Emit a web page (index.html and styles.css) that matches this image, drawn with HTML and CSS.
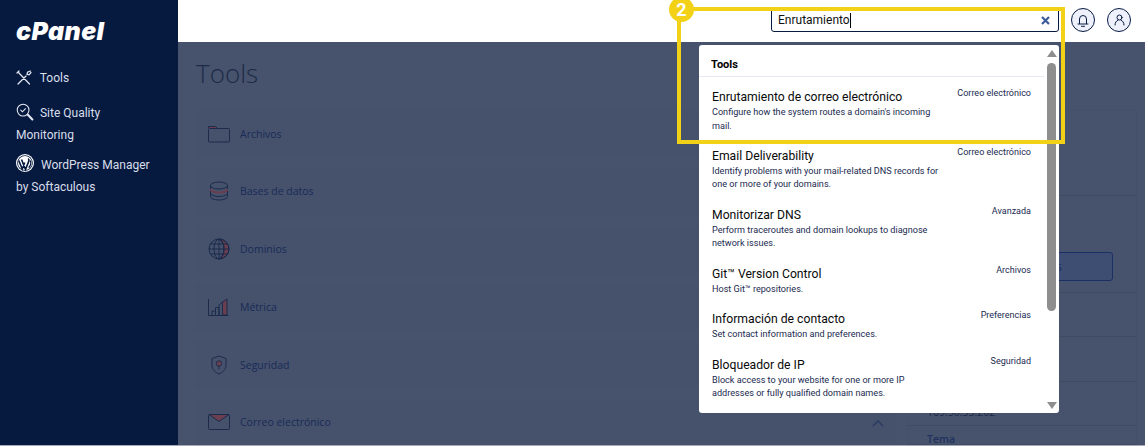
FILE: index.html
```html
<!DOCTYPE html>
<html>
<head>
  <title>cPanel Tools</title>
  <link rel="stylesheet" href="styles.css">
</head>
<body>
  <div class="app">
    <aside class="sidebar">
      <div class="logo">cPanel</div>
      <nav class="side-nav">
        <a class="side-link">
          <svg class="side-icon" width="16" height="15" viewBox="0 0 16 15" fill="none" stroke="#e6e9f2" stroke-width="1.2" stroke-linecap="round"><path d="M2 2l11.500 12M1 3l2-2M14.500 1l-3 1.300-.5 2 2 .5 2-2.300M10 6L2 14"/></svg>
          Tools
        </a>
        <a class="side-link">
          <svg class="side-icon side-icon-search" width="18" height="18" viewBox="0 0 19 19" fill="none" stroke="#e6e9f2" stroke-width="1.1" stroke-linecap="round"><circle cx="7.500" cy="7.500" r="6.200"/><path d="M5 7.500l1.800 1.800L10 6"/><path d="M12.500 12.500l4.800 4.800" stroke-width="2.200"/></svg>
          Site Quality Monitoring
        </a>
        <a class="side-link">
          <svg class="side-icon side-icon-wp" width="18" height="18" viewBox="0 0 18 18" fill="none"><circle cx="9" cy="9" r="9" fill="#fff"/><circle cx="9" cy="9" r="7.800" fill="#061a40"/><circle cx="9" cy="9" r="7" fill="#fff"/><path d="M2.800 6.500L6.200 15l2.500-6.500M5.500 5.500L9.500 15.600l3.200-8.200c.5-1.400.2-2.400-.8-2.400" stroke="#061a40" stroke-width="1.600"/><path d="M14.200 6.500c1.200 2.400.8 4.800-1.500 7.200" stroke="#061a40" stroke-width="1.300"/></svg>
          WordPress Manager by Softaculous
        </a>
      </nav>
    </aside>

    <div class="content">
      <header class="topbar">
        <div class="search">
          <span class="search-text">Enrutamiento</span>
          <svg width="9" height="9" viewBox="0 0 9 9" fill="none" stroke="#3c5c9c" stroke-width="2.200"><path d="M1 1l7 7M8 1l-7 7"/></svg>
        </div>
        <button class="round-btn">
          <svg width="12" height="13" viewBox="0 0 12 13" fill="none" stroke="#061a40" stroke-width="1" stroke-linecap="round"><path d="M2.500 9.500V5a3.500 3.500 0 0 1 7 0v4.500M1 10h10M4.500 12.300h3"/></svg>
        </button>
        <button class="round-btn">
          <svg width="11" height="12" viewBox="0 0 11 12" fill="none" stroke="#061a40" stroke-width="1" stroke-linecap="round"><circle cx="5.500" cy="3.500" r="2.500"/><path d="M1 11c0-2.500 1.500-4.300 3-4.800M10 11c0-2.500-1.500-4.300-3-4.800"/></svg>
        </button>
      </header>

      <main class="main">
        <h1 class="page-title">Tools</h1>
        <div class="columns">
          <div class="tool-groups">
            <div class="group-card">
              <svg class="group-icon" width="22" height="18" viewBox="0 0 22 18" fill="none" stroke="#1c2a4c" stroke-width="1"><path d="M.5 3V1.500h7L9 3" fill="#6b3f50"/><rect x=".5" y="3.500" width="21" height="13.500" rx="1"/></svg>
              <span>Archivos</span>
            </div>
            <div class="group-card">
              <svg class="group-icon" width="22" height="20" viewBox="0 0 22 20" fill="none" stroke="#1c2a4c" stroke-width="1"><ellipse cx="11" cy="4.500" rx="8.500" ry="3.500"/><path d="M2.500 4.500v11c0 2 3.800 3.500 8.500 3.500s8.500-1.500 8.500-3.500v-11"/><path d="M2.500 8c0 2 3.800 3.500 8.500 3.500s8.500-1.500 8.500-3.500" stroke="#6b3f50" stroke-width="2"/><path d="M2.500 12c0 2 3.800 3.500 8.500 3.500s8.500-1.500 8.500-3.500"/></svg>
              <span>Bases de datos</span>
            </div>
            <div class="group-card">
              <svg class="group-icon" width="22" height="22" viewBox="0 0 22 22" fill="none" stroke="#1c2a4c" stroke-width="1"><path d="M11 1a10 10 0 0 1 0 20c3-2 5-5.500 5-10S14 3 11 1z" fill="#6b3f50"/><circle cx="11" cy="11" r="10"/><ellipse cx="11" cy="11" rx="5" ry="10"/><path d="M11 1v20M1 11h20M2.500 6h17M2.500 16h17"/></svg>
              <span>Dominios</span>
            </div>
            <div class="group-card">
              <svg class="group-icon" width="22" height="18" viewBox="0 0 22 18" fill="none" stroke="#1c2a4c" stroke-width="1"><path d="M.5 1v16.500h20"/><path d="M4 17v-4h3.500v4M7.500 17v-7.500H11V17M11 17V7l3.500-3V17"/><path d="M14.500 17V4L19 1v16z" fill="#6b3f50"/></svg>
              <span>Métrica</span>
            </div>
            <div class="group-card">
              <svg class="group-icon" width="22" height="20" viewBox="0 0 22 20" fill="none" stroke="#1c2a4c" stroke-width="1"><path d="M11 1l7 2.500v7c0 4-3.500 7-7 8.500-3.500-1.500-7-4.500-7-8.500v-7z"/><circle cx="11" cy="8.500" r="2.700" fill="#6b3f50"/><path d="M11 11v3.500"/></svg>
              <span>Seguridad</span>
            </div>
            <div class="group-card">
              <svg class="group-icon" width="22" height="16" viewBox="0 0 22 16" fill="none" stroke="#1c2a4c" stroke-width="1"><path d="M1 .5h20L11 7.500z" fill="#6b3f50"/><rect x=".5" y=".5" width="21" height="15" rx="1"/></svg>
              <span>Correo electrónico</span>
              <svg class="group-chevron" width="12" height="7" viewBox="0 0 12 7" fill="none" stroke="#2b3c63" stroke-width="1.600"><path d="M1 6l5-5 5 5"/></svg>
            </div>
          </div>

          <aside class="info-card">
            <div class="info-section info-a"></div>
            <div class="info-section info-b"><div class="info-btn">Más</div></div>
            <div class="info-section info-c"></div>
            <div class="info-section info-d"></div>
            <div class="info-section info-e"><span class="info-value">169.50.55.202</span></div>
            <div class="info-section info-f"><span class="info-label">Tema</span></div>
          </aside>
        </div>
      </main>
    </div>
  </div>

  <div class="search-results">
    <div class="results-list">
      <div class="results-head">Tools</div>
      <div class="result">
        <div class="result-text">
          <div class="result-title">Enrutamiento de correo electrónico</div>
          <div class="result-desc">Configure how the system routes a domain's incoming mail.</div>
        </div>
        <div class="result-cat">Correo electrónico</div>
      </div>
      <div class="result">
        <div class="result-text">
          <div class="result-title">Email Deliverability</div>
          <div class="result-desc">Identify problems with your mail-related DNS records for one or more of your domains.</div>
        </div>
        <div class="result-cat">Correo electrónico</div>
      </div>
      <div class="result">
        <div class="result-text">
          <div class="result-title">Monitorizar DNS</div>
          <div class="result-desc">Perform traceroutes and domain lookups to diagnose network issues.</div>
        </div>
        <div class="result-cat">Avanzada</div>
      </div>
      <div class="result">
        <div class="result-text">
          <div class="result-title">Git™ Version Control</div>
          <div class="result-desc">Host Git™ repositories.</div>
        </div>
        <div class="result-cat">Archivos</div>
      </div>
      <div class="result">
        <div class="result-text">
          <div class="result-title">Información de contacto</div>
          <div class="result-desc">Set contact information and preferences.</div>
        </div>
        <div class="result-cat">Preferencias</div>
      </div>
      <div class="result">
        <div class="result-text">
          <div class="result-title">Bloqueador de IP</div>
          <div class="result-desc">Block access to your website for one or more IP addresses or fully qualified domain names.</div>
        </div>
        <div class="result-cat">Seguridad</div>
      </div>
    </div>
    <div class="scroll">
      <div class="scroll-up"></div>
      <div class="scroll-thumb"></div>
      <div class="scroll-down"></div>
    </div>
  </div>

  <div class="highlight"></div>
  <div class="badge">2</div>
</body>
</html>
```

FILE: styles.css
```css
html, body {
  margin: 0;
  padding: 0;
  height: 100%;
  overflow: hidden;
}

body {
  font-family: Roboto, sans-serif;
  background-color: #47536c;
  border-bottom: 1px solid #a3a9b6;
  box-sizing: border-box;
}

.app {
  display: flex;
  height: 445px;
}

.sidebar {
  width: 178px;
  flex-shrink: 0;
  background-color: #061a40;
  color: #d9deea;
}

.logo {
  margin: 17px 0 0 16px;
  height: 28px;
  font-family: Inter, sans-serif;
  font-size: 25px;
  line-height: 28px;
  font-weight: 900;
  font-style: italic;
  color: #fff;
  letter-spacing: 0.4px;
}

.side-nav {
  margin-top: 22px;
  padding: 0 22px 0 16px;
  font-size: 12px;
  line-height: 22px;
}

.side-link {
  display: block;
  margin-bottom: 8px;
}

.side-link:first-child {
  margin-bottom: 13px;
}

.side-icon {
  vertical-align: -3px;
  margin-right: 5px;
}

.side-icon-search {
  margin-right: 3px;
  vertical-align: -4px;
}

.side-icon-wp {
  margin-right: 4px;
}

.content {
  flex: 1;
  min-width: 0;
  display: flex;
  flex-direction: column;
}

.topbar {
  height: 42px;
  flex-shrink: 0;
  box-sizing: border-box;
  padding: 0 14px 2px 0;
  background-color: #fff;
  display: flex;
  align-items: center;
  justify-content: flex-end;
  gap: 12px;
}

.search {
  width: 288px;
  height: 24px;
  box-sizing: border-box;
  border: 1px solid #061a40;
  border-radius: 3px;
  padding: 0 8px 0 6px;
  display: flex;
  align-items: center;
  justify-content: space-between;
  font-size: 12px;
  color: #111;
}

.search-text {
  border-right: 1px solid #000;
  line-height: 15px;
}

.round-btn {
  width: 24px;
  height: 24px;
  padding: 0;
  border: 1px solid #061a40;
  border-radius: 50%;
  background-color: #eef0fb;
  display: flex;
  align-items: center;
  justify-content: center;
}

.main {
  flex: 1;
  min-height: 0;
  overflow: hidden;
  padding: 0 8px 0 18px;
}

.page-title {
  margin: 12px 0 18px;
  font-family: "Open Sans", sans-serif;
  font-size: 26px;
  line-height: 38px;
  font-weight: 300;
  color: #1d2a48;
}

.columns {
  display: flex;
  gap: 10px;
  margin-left: -1px;
}

.tool-groups {
  flex: 1;
  display: flex;
  flex-direction: column;
  gap: 9.75px;
}

.group-card {
  height: 48px;
  flex-shrink: 0;
  box-sizing: border-box;
  padding: 0 13px 1px;
  background-color: #46526b;
  display: flex;
  align-items: center;
  gap: 10px;
  font-family: "Open Sans", sans-serif;
  font-size: 10.5px;
  color: #192a58;
}

.group-icon {
  width: 22px;
  flex-shrink: 0;
}

.group-chevron {
  margin-left: auto;
  margin-top: 2px;
}

.info-card {
  width: 230px;
  flex-shrink: 0;
  background-color: #47536c;
  border: 1px solid #445069;
  box-sizing: border-box;
  height: 340px;
}

.info-section {
  box-sizing: border-box;
  border-bottom: 1px solid #3f4a63;
  padding: 0 19px;
}

.info-a { height: 85px; }
.info-b { height: 97px; padding-top: 56px; }
.info-c { height: 44px; }
.info-d { height: 45px; }
.info-e { height: 44px; padding-top: 23px; }
.info-f { padding-top: 8px; }

.info-btn {
  width: 186px;
  height: 29px;
  box-sizing: border-box;
  border: 1px solid #1a2f66;
  border-radius: 3px;
  padding-right: 50px;
  background-color: #3e4d72;
  color: #1f3160;
  font-family: "Open Sans", sans-serif;
  font-size: 12px;
  line-height: 27px;
  text-align: right;
}

.info-value {
  display: block;
  font-family: "Open Sans", sans-serif;
  font-size: 10.5px;
  line-height: 14px;
  color: #1d2a48;
}

.info-label {
  display: block;
  font-family: "Open Sans", sans-serif;
  font-size: 10.5px;
  font-weight: 600;
  line-height: 10px;
  color: #1f3160;
}

.search-results {
  position: absolute;
  left: 699px;
  top: 45px;
  width: 360px;
  height: 368px;
  background-color: #fff;
  border-radius: 3px;
  display: flex;
}

.results-list {
  flex: 1;
  min-width: 0;
}

.results-head {
  height: 32px;
  box-sizing: border-box;
  padding: 13px 12px 0;
  border-bottom: 1px solid #e6e8f3;
  font-size: 11px;
  line-height: 14px;
  font-weight: 700;
  color: #000;
}

.result {
  display: flex;
  justify-content: space-between;
  padding: 12px 13px 2.93px;
}

.result-text {
  width: 232px;
}

.result-title {
  font-size: 12.2px;
  line-height: 17px;
  color: #0a0a0a;
}

.result-desc {
  font-size: 9.1px;
  line-height: 13.5px;
  color: #1a2a50;
}

.result-cat {
  margin-top: -2px;
  font-size: 9px;
  line-height: 13px;
  color: #1a2a50;
}

.scroll {
  width: 15px;
  flex-shrink: 0;
  display: flex;
  flex-direction: column;
  align-items: center;
}

.scroll-up,
.scroll-down {
  width: 0;
  height: 0;
  border-left: 5px solid transparent;
  border-right: 5px solid transparent;
}

.scroll-up {
  margin-top: 5px;
  border-bottom: 7px solid #8e8e8e;
}

.scroll-down {
  margin-top: auto;
  margin-bottom: 4px;
  border-top: 7px solid #8e8e8e;
}

.scroll-thumb {
  width: 9px;
  height: 248px;
  margin-top: 6px;
  border-radius: 5px;
  background-color: #8e8e8e;
}

.highlight {
  position: absolute;
  left: 677px;
  top: 7px;
  width: 388px;
  height: 137px;
  box-sizing: border-box;
  border: 4px solid #f3d116;
}

.badge {
  position: absolute;
  left: 669px;
  top: -3px;
  width: 25px;
  height: 25px;
  border-radius: 50%;
  background-color: #f3d116;
  color: #fff;
  font-size: 18px;
  font-weight: 700;
  line-height: 25px;
  text-align: center;
}
```
